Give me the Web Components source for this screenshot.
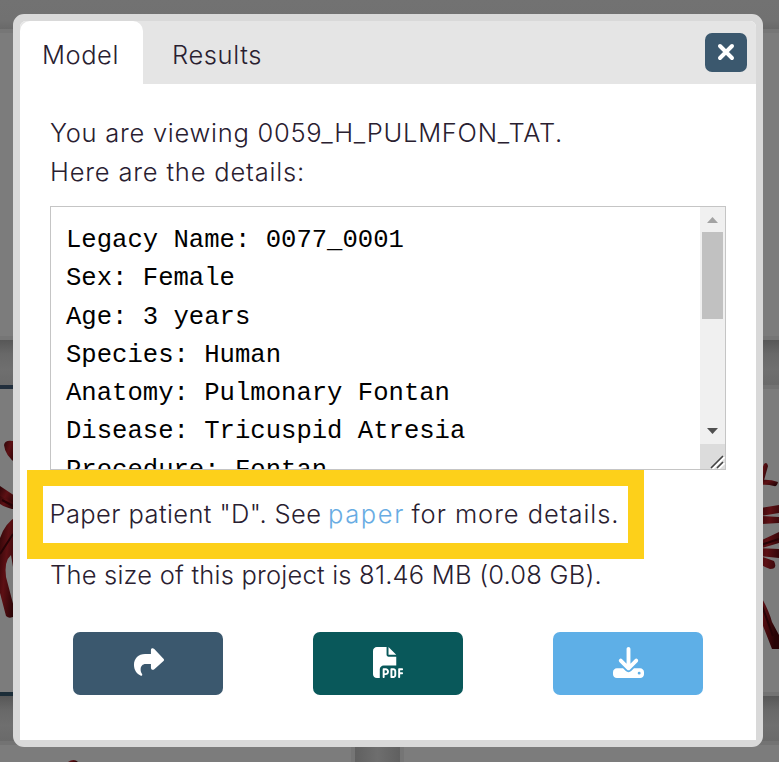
<!DOCTYPE html>
<html lang="en"><head><meta charset="utf-8"><title>Model details</title>
<style>html,body{margin:0;width:779px;height:762px;overflow:hidden;background:#727272}</style></head>
<body><model-page></model-page>
<script>
const define=(name,html,init)=>customElements.define(name,class extends HTMLElement{
  constructor(){super();this.attachShadow({mode:'open'}).innerHTML=html}
  connectedCallback(){if(init)init(this)}
});

// One line of text whose tracking is adjusted to fill the given width.
define('text-line',`<style>:host{display:block;white-space:nowrap;line-height:39px}span{display:inline-block}</style><span><slot></slot></span>`,el=>{
  const s=el.shadowRoot.querySelector('span');
  s.style.letterSpacing=(+el.getAttribute('width')-s.getBoundingClientRect().width)/el.textContent.length+'px';
});

define('tab-item',`<style>:host{display:flex;align-items:center;box-sizing:border-box;height:63px;padding:3px 24px 0 22px}
:host([active]){background:#fff;border-radius:10px 10px 0 0}</style><slot></slot>`);

define('icon-button',`<style>:host{display:block;width:150px;height:63px}
button{display:flex;align-items:center;justify-content:center;width:100%;height:100%;padding:0;border:0;border-radius:7px;background:var(--bg)}
::slotted(svg){display:block}</style><button><slot></slot></button>`);

define('detail-box',`<style>:host{display:flex;box-sizing:border-box;width:676px;height:264px;border:1px solid #c5c5c5;background:#fff;overflow:hidden}
pre{flex:1;margin:0;padding:15px 16px 0 15px;box-sizing:border-box;height:262px;overflow:hidden;font:25.6px/38.3px "Liberation Mono",monospace;color:#000}
.bar{width:25px;display:flex;flex-direction:column;background:#f0f0f0}
svg{display:block;flex:none}.thumb{height:87px;margin:0 2px;background:#c1c1c1}.space{flex:1}.grip{background:#dcdcdc}</style>
<pre><slot></slot></pre><div class="bar"><svg width="25" height="25"><path d="M7 16l5.500-6 5.500 6z" fill="#a3a3a3"/></svg><div class="thumb"></div><div class="space"></div>
<svg width="25" height="25"><path d="M7 9h11l-5.500 6z" fill="#505050"/></svg><svg class="grip" width="25" height="25"><path d="M11 24L23 12M17 24l6-6" stroke="#fff" stroke-width="2" transform="translate(1.500 1)"/><path d="M11 24L23 12M17 24l6-6" stroke="#444" stroke-width="1.600"/></svg></div>`);

define('page-backdrop',`<style>:host{display:block;width:779px;height:762px}svg{display:block}</style>
<svg width="779" height="762"><defs>
<linearGradient id="g" x2="0" y2="1"><stop stop-color="#575757"/><stop offset=".3" stop-color="#686868"/><stop offset=".65" stop-color="#6f6f6f"/><stop offset="1" stop-color="#6a6a6a"/></linearGradient>
<linearGradient id="t" x2="0" y2="1"><stop stop-color="#727272"/><stop offset=".7" stop-color="#717171"/><stop offset="1" stop-color="#696969"/></linearGradient>
<linearGradient id="v"><stop stop-color="#606060"/><stop offset=".5" stop-color="#6e6e6e"/><stop offset="1" stop-color="#606060"/></linearGradient>
<linearGradient id="r" x2="1" y2=".6"><stop stop-color="#2e0507"/><stop offset=".45" stop-color="#5d1014"/><stop offset="1" stop-color="#280406"/></linearGradient></defs>
<rect width="779" height="762" fill="#7c7c7c"/><rect width="779" height="29" fill="url(#t)"/><rect y="29" width="779" height="4" fill="#767676"/>
<rect y="336" width="779" height="4" fill="#767676"/><rect y="340" width="779" height="45" fill="url(#g)"/><rect y="385" width="779" height="4" fill="#737373"/><rect y="385" width="20" height="4" fill="#222f3d"/>
<rect y="692" width="779" height="4" fill="#737373"/><rect y="692" width="20" height="4" fill="#1c2d38"/><rect y="696" width="779" height="45" fill="url(#g)"/><rect y="741" width="779" height="4" fill="#737373"/>
<rect x="351" y="745" width="4" height="17" fill="#757575"/><rect x="355" y="745" width="45" height="17" fill="url(#v)"/><rect x="400" y="745" width="4" height="17" fill="#757575"/>
<g fill="url(#r)"><path d="M4 445q1-5 8-4h5v23Q5 456 4 445z"/><path d="M0 493l17 5v12Q6 508 0 504z"/><path d="M0 486l18 12v7L0 496z"/><path d="M0 538Q5 523 17 516V577l-4-10-2-12q-7 6-5 22l10 38q-6 5-10 1L0 593z"/>
<path d="M759 478l5-14q3-3 4 2l-5 18z"/><path d="M760 480q10-1 18 2-1 5-4 4-7-2-14-1z"/><path d="M760 508l19-3v8l-19 3zM760 516l19 1v6l-19 1zM758 542l21-10v11l-20 6zM758 548l21 1v9l-20-2zM760 556l14 5q4 8-4 8-7-2-12-7zM758 591q11 19 14 31l7 13v14h-7l-14-36z"/><path d="M68 762q6-4 10 0z"/></g>
<path d="M0 554l13-20M2 500l13 7M761 545l18-6M761 603l12 33" stroke="#260306" stroke-width="2"/></svg>`);

define('model-dialog',`<style>:host{display:block;box-sizing:border-box;width:750px;height:733px;border:7px solid #d9d9d9;border-radius:11px;background:#d9d9d9;font:25.500px/39px Inter,sans-serif;font-weight:350;color:#292030}
.sheet{background:#fff;height:719px;border-radius:6px 6px 0 0;overflow:hidden}
header{display:flex;height:63px;background:#e5e5e5}
.gap{flex:1}.close{width:42px;height:39px;margin:12px 9px 0 0}
main{padding:29px 30px 0}detail-box{margin-top:15px}
.note{position:relative;z-index:1;display:flex;justify-content:space-between;box-sizing:border-box;width:617px;height:89px;margin-left:-23.500px;border:16px solid #fdd01a;padding:8px 8px 0 7px;background:#fff}
.link{color:#68ace3}
.size{margin-top:-4px}.actions{display:flex;justify-content:space-between;padding:38px 23px 0}.actions svg{margin-bottom:2px}</style>
<div class="sheet"><header><tab-item active><text-line width="77">Model</text-line></tab-item><tab-item style="padding-left:29px"><text-line width="90">Results</text-line></tab-item><div class="gap"></div>
<icon-button class="close" style="--bg:#3b586e"><svg width="18" height="18" style="margin-bottom:2px"><path d="M3 3l12 12M15 3L3 15" stroke="#fff" stroke-width="4" stroke-linecap="round"/></svg></icon-button></header>
<main><text-line width="513">You are viewing 0059_H_PULMFON_TAT.</text-line><text-line width="255">Here are the details:</text-line>
<detail-box>Legacy Name: 0077_0001
Sex: Female
Age: 3 years
Species: Human
Anatomy: Pulmonary Fontan
Disease: Tricuspid Atresia
Procedure: Fontan</detail-box>
<div class="note"><text-line width="272">Paper patient "D". See</text-line><text-line class="link" width="77">paper</text-line><text-line width="208">for more details.</text-line></div>
<text-line class="size" width="552">The size of this project is 81.46 MB (0.08 GB).</text-line>
<div class="actions">
<icon-button style="--bg:#3b586e"><svg width="31" height="31" viewBox="0 0 32 32"><path d="M18.500 3.200v4H12.500C5.500 7.200 1 12 1 18.200c0 6 3.300 9.300 6.700 11.200 1.500.8 2.400-.6 1.500-1.900-1-1.600-1.400-2.800-1.300-4.600.1-3 2-5.300 5.100-5.300h5.500v3.600c0 2.300 2 3 3.500 1.700l9.200-8.100c1.100-1 1.100-2 0-3L22 2c-1.600-1.400-3.500-.9-3.500 1.200z" fill="#fff"/></svg></icon-button>
<icon-button style="--bg:#09585a"><svg width="31" height="31" viewBox="0 0 512 512"><path fill="#fff" d="M0 64C0 28.700 28.700 0 64 0H224V128c0 17.700 14.300 32 32 32H384V304H176c-35.300 0-64 28.700-64 64V512H64c-35.300 0-64-28.700-64-64V64zm384 64H256V0L384 128zM176 352h32c30.900 0 56 25.100 56 56s-25.100 56-56 56H192v32c0 8.800-7.200 16-16 16s-16-7.200-16-16V368c0-8.800 7.200-16 16-16zm32 80c13.300 0 24-10.700 24-24s-10.700-24-24-24H192v48h16zm96-80h32c26.500 0 48 21.500 48 48v64c0 26.500-21.500 48-48 48H304c-8.800 0-16-7.200-16-16V368c0-8.800 7.200-16 16-16zm32 128c8.800 0 16-7.200 16-16V400c0-8.800-7.200-16-16-16H320v96h16zm80-112c0-8.800 7.200-16 16-16h48c8.800 0 16 7.200 16 16s-7.200 16-16 16H448v32h32c8.800 0 16 7.200 16 16s-7.200 16-16 16H448v48c0 8.800-7.200 16-16 16s-16-7.200-16-16V368z"/></svg></icon-button>
<icon-button style="--bg:#5eafe7"><svg width="31" height="31" viewBox="0 0 512 512"><path fill="#fff" d="M288 32c0-17.700-14.300-32-32-32s-32 14.300-32 32V274.700l-73.400-73.400c-12.500-12.500-32.800-12.500-45.300 0s-12.500 32.800 0 45.300l128 128c12.500 12.500 32.800 12.500 45.300 0l128-128c12.500-12.500 12.500-32.800 0-45.300s-32.800-12.500-45.300 0L288 274.700V32zM64 352c-35.300 0-64 28.700-64 64v32c0 35.300 28.700 64 64 64H448c35.300 0 64-28.700 64-64V416c0-35.300-28.700-64-64-64H346.500l-45.300 45.300c-25 25-65.500 25-90.500 0L165.500 352H64zm368 56a24 24 0 1 1 0 48 24 24 0 1 1 0-48z"/></svg></icon-button>
</div></main></div>`);

define('model-page',`<style>:host{display:grid;width:779px;height:762px}page-backdrop,model-dialog{grid-area:1/1}model-dialog{margin:14px 0 0 13px}</style><page-backdrop></page-backdrop><model-dialog></model-dialog>`);
</script></body></html>
